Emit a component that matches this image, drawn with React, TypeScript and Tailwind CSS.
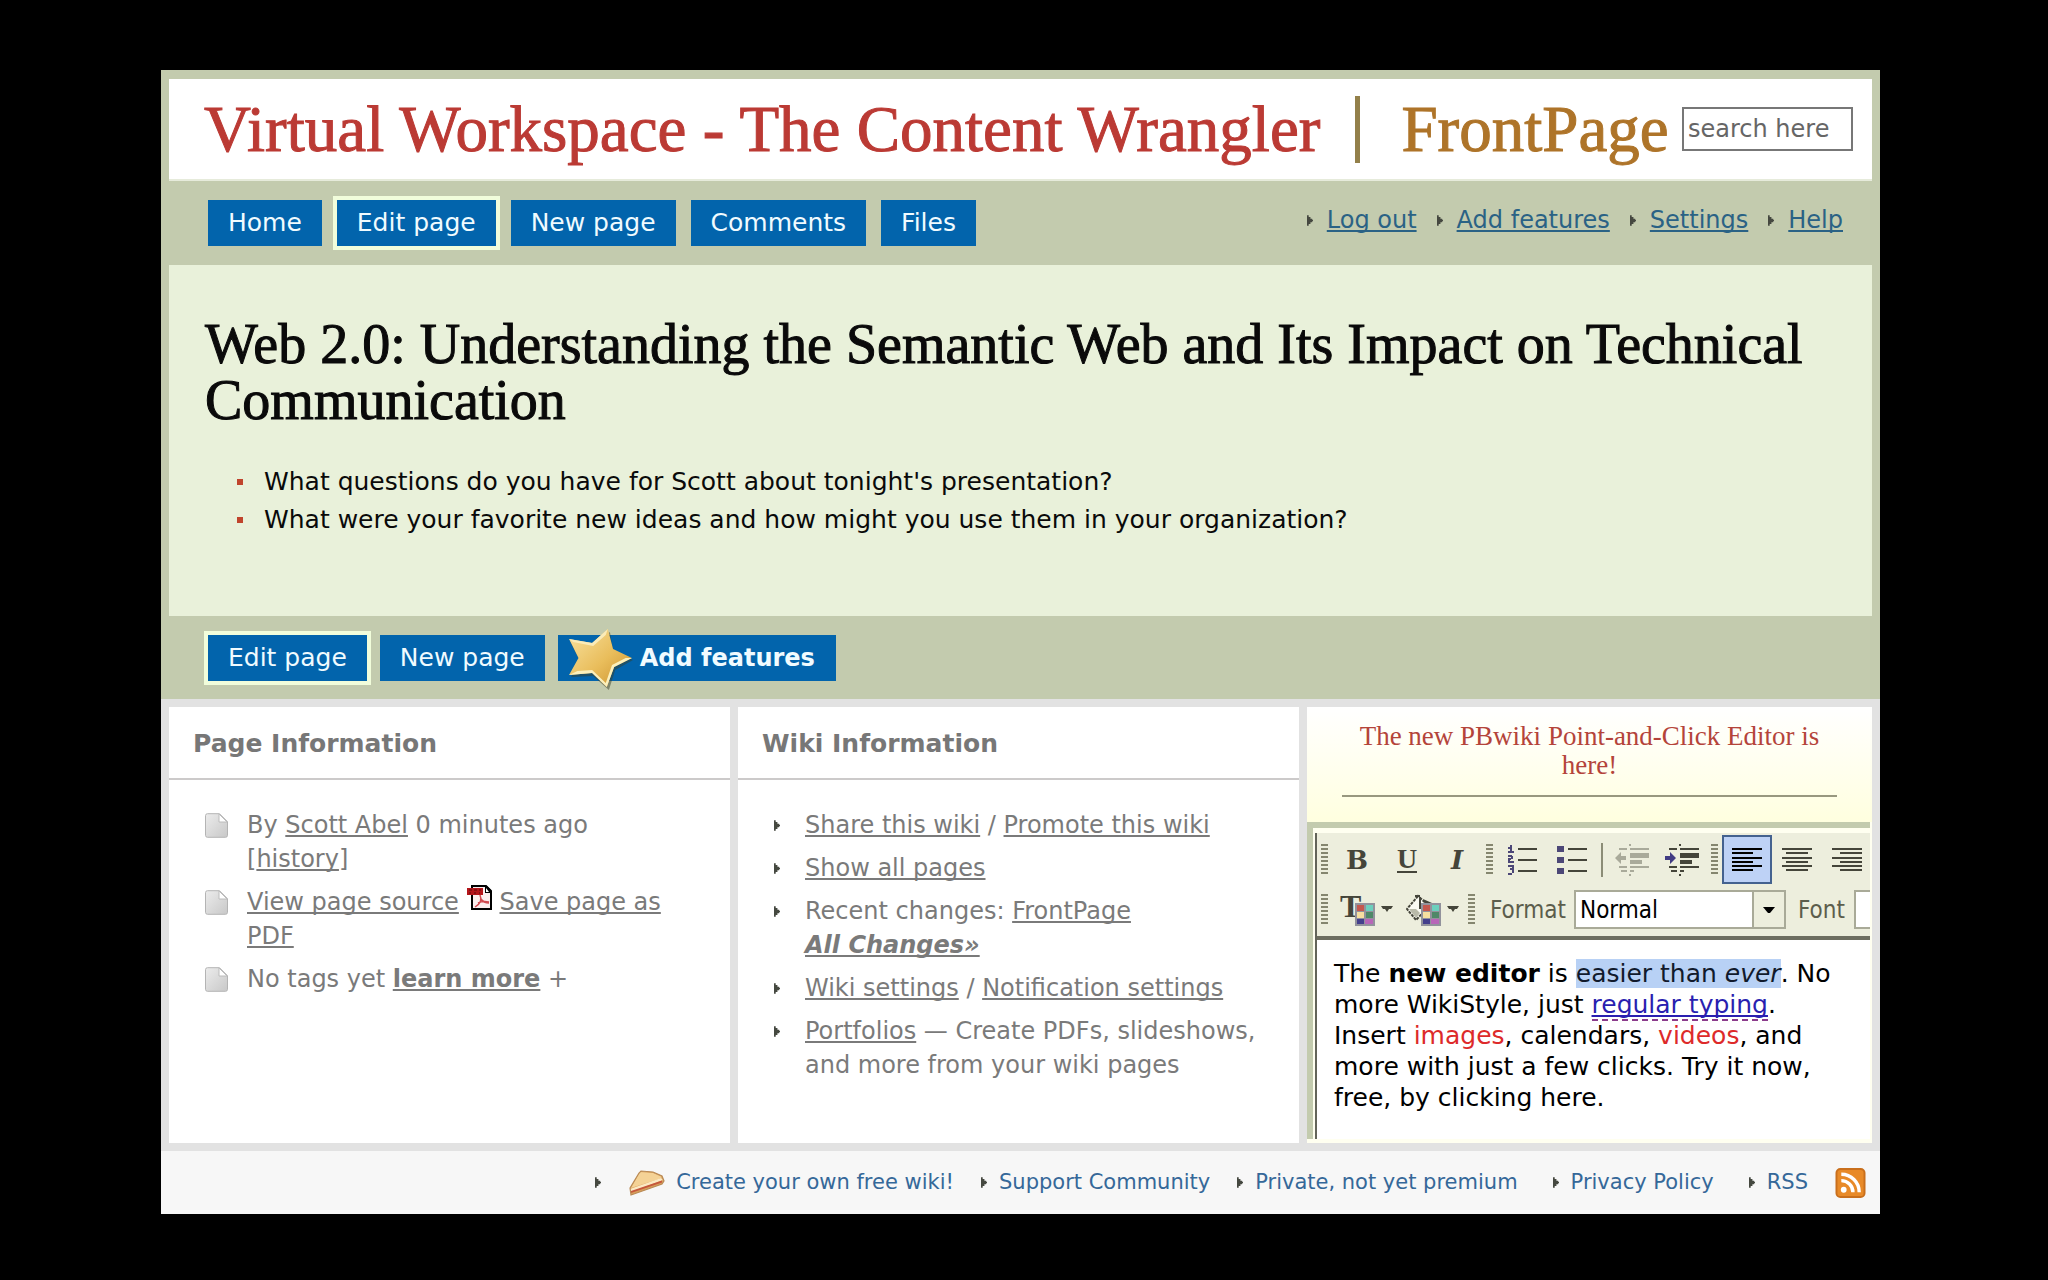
import type { ReactNode } from 'react'

const sans = "font-['Verdana','DejaVu_Sans',sans-serif]"
const narrow = "font-['Tahoma','DejaVu_Sans_Condensed','DejaVu_Sans',sans-serif]"
const serif = "font-['Georgia','Liberation_Serif',serif]"
const underlined = 'underline decoration-2 underline-offset-2 [text-decoration-skip-ink:none]'

function Arrow() {
  return (
    <svg viewBox="0 0 7 12" className="h-[11px] w-[6px] shrink-0 fill-[#454840]" aria-hidden="true">
      <path d="M0 0h2v2h2v2h2v1h1v2H6v1H4v2H2v2H0z" />
    </svg>
  )
}

function TabButton({ children, active = false }: { children: ReactNode; active?: boolean }) {
  return (
    <button
      type="button"
      className={`flex h-[46px] items-center bg-[#0264ac] px-5 text-[25px] text-[#f0fbff] ${
        active ? 'ring-4 ring-[#f1fddb]' : ''
      }`}
    >
      {children}
    </button>
  )
}

function TextLink({ children, className = '' }: { children: ReactNode; className?: string }) {
  return (
    <a href="#" className={`${underlined} ${className}`}>
      {children}
    </a>
  )
}

function StarIcon() {
  return (
    <svg viewBox="0 0 62 62" className="absolute -top-[6px] left-[10px] h-[62px] w-[65px]" preserveAspectRatio="none" aria-hidden="true">
      <defs>
        <linearGradient id="star" x1="0" y1="0" x2="1" y2="1">
          <stop offset="0" stopColor="#f8e2a0" />
          <stop offset="0.55" stopColor="#e9bd5b" />
          <stop offset="1" stopColor="#c98f2a" />
        </linearGradient>
      </defs>
      <path d="M40 3 43 22 62 31 45 41 39 61 24 47 3 48 11 31 2 13 24 16z" fill="#3a3d25" opacity="0.5" />
      <path d="M38 0 43 20 61 29 44 38 37 58 23 44 1 46 10 29 1 10 23 14z" fill="url(#star)" />
      <path d="M1 46 9 42 23 41 36 54 42 36 55 29 61 29 44 38 37 58 23 44z" fill="#fbf0bd" />
      <path d="M1 10 23 14 38 0 36 6 24 17 5 13z" fill="#faebb8" />
    </svg>
  )
}

function PageIcon() {
  return (
    <svg viewBox="0 0 23 25" className="h-[25px] w-[23px] shrink-0" aria-hidden="true">
      <defs>
        <linearGradient id="sheet" x1="0" y1="0" x2="1" y2="1">
          <stop offset="0" stopColor="#ececec" />
          <stop offset="1" stopColor="#c8c8c8" />
        </linearGradient>
      </defs>
      <path
        d="M2.500 .7h12l8 8v13.600a2 2 0 0 1-2 2h-18a2 2 0 0 1-2-2v-19.600a2 2 0 0 1 2-2z"
        fill="url(#sheet)"
        stroke="#b4b4b4"
      />
      <path d="M14 1v8h8z" fill="#fff" stroke="#bcbcbc" />
    </svg>
  )
}

function PdfIcon() {
  return (
    <svg viewBox="0 0 25 25" className="mr-2 inline-block h-[25px] w-[25px] align-[0px]" aria-hidden="true">
      <path d="M5 1h14l5 5v18H5z" fill="#fbeeee" stroke="#000" strokeWidth="2" />
      <path d="M18 1h2l4 4v3h-6z" fill="#000" />
      <path d="M19 3v4h3z" fill="#fff" />
      <path d="M0 3h16v7H0z" fill="#b5161b" />
      <path d="M2 5h3M7 5h3M12 5h2M2 8h2M7 8h2M12 8h1" stroke="#5d0a0c" strokeWidth="1" />
      <path d="M13 10c2 5 1 8-5 12M14 14c2 3 4 4 8 4M11 18c4-2 7-2 11-1" fill="none" stroke="#d04a50" strokeWidth="1.500" />
    </svg>
  )
}

function SandwichIcon() {
  return (
    <svg viewBox="0 0 36 26" className="h-[26px] w-9 shrink-0" aria-hidden="true">
      <path d="M1 18 10 3 12 1 24 2 33 6 35 11 33 14 2 25z" fill="#d9a05c" />
      <path d="M2 18 11 2 24 3 33 7 30 9z" fill="#f4d296" />
      <path d="M1 19 32 8 34 10 2 22z" fill="#fbe9c4" />
      <path d="M2 21 33 10.500 33 12.500 2 23z" fill="#c5573c" />
      <path d="M1 18 10 3 12 1 24 2 33 6 35 11 33 14 2 25z" fill="none" stroke="#b98a55" strokeWidth="1.200" />
    </svg>
  )
}

function RssIcon() {
  return (
    <svg viewBox="0 0 31 31" className="h-[30px] w-[31px] shrink-0" aria-hidden="true">
      <rect x="1" y="1" width="29" height="29" rx="4" fill="#e88a28" stroke="#c96f1c" strokeWidth="2" />
      <circle cx="8.500" cy="22.500" r="3" fill="#fff" />
      <path d="M6 13a12 12 0 0 1 12 12M6 6.500A18.500 18.500 0 0 1 24.500 25" fill="none" stroke="#fff" strokeWidth="3.500" />
    </svg>
  )
}

function Grip() {
  return (
    <svg viewBox="0 0 7 32" className="mx-1 h-8 w-[7px] shrink-0" aria-hidden="true">
      <path d="M0 1h7M0 5h7M0 9h7M0 13h7M0 17h7M0 21h7M0 25h7M0 29h7" stroke="#85866f" strokeWidth="2" />
    </svg>
  )
}

function ToolButton({ label, children, active = false }: { label: string; children: ReactNode; active?: boolean }) {
  return (
    <button
      type="button"
      aria-label={label}
      className={`flex h-[49px] w-[50px] shrink-0 items-center justify-center text-[#45453a] ${
        active ? 'border-2 border-[#44628f] bg-[#bed2f6] text-black' : ''
      }`}
    >
      {children}
    </button>
  )
}

function LinesIcon({ d }: { d: string }) {
  return (
    <svg viewBox="0 0 30 24" className="h-6 w-[30px]" stroke="currentColor" strokeWidth="2" aria-hidden="true">
      <path d={d} />
    </svg>
  )
}

function NumberedIcon() {
  return (
    <svg viewBox="0 0 30 30" className="h-[30px] w-[30px]" fill="none" strokeWidth="2" aria-hidden="true">
      <path d="M11 4h19M11 15h19M11 26h19" stroke="#45453a" />
      <path d="M1 3h2M4 0v6M1 7h6M1 11h4M5 11v3M4 14H2v3h5M1 21h5v3H3M6 24v4M1 29h4" stroke="#4c4777" />
    </svg>
  )
}

function BulletedIcon() {
  return (
    <svg viewBox="0 0 30 30" className="h-[30px] w-[30px]" aria-hidden="true">
      <path d="M11 4h19M11 15h19M11 26h19" stroke="#45453a" strokeWidth="2" />
      <path d="M0 1h7v6H0zM0 12h7v6H0zM0 23h7v6H0z" fill="#4c4777" />
    </svg>
  )
}

function IndentIcon({ outdent = false }: { outdent?: boolean }) {
  const ink = outdent ? '#a9aa9a' : '#45453a'
  return (
    <svg viewBox="0 0 34 32" className="h-8 w-[34px]" aria-hidden="true">
      <path d="M4 5h8M15 5h19M4 23h8M15 23h19M6 27h6M15 27h4M14 1h2M14 31h2" stroke={ink} strokeWidth="2" />
      <path d="M15 9h19v5H15zM15 16h12v4H15z" fill={ink} />
      {outdent ? (
        <path d="M0 14 6 8v4h5v4H6v4z" fill={ink} />
      ) : (
        <path d="M11 14 5 8v4H0v4h5v4z" fill="#413b83" />
      )}
    </svg>
  )
}

function Swatches() {
  return (
    <>
      <path d="M15 9h20v23H15z" fill="#92929c" />
      <path d="M17 11h7v6h-7z" fill="#c4574e" />
      <path d="M26 11h7v6h-7z" fill="#6cd0bd" />
      <path d="M17 18h7v6h-7z" fill="#f6dfa0" />
      <path d="M26 18h7v6h-7z" fill="#4f8868" />
      <path d="M17 25h7v5h-7z" fill="#443f8c" />
      <path d="M25 25h8v5h-8z" fill="#b866b8" />
      <path d="M41 12h12l-2 3h-2l-2 3-2-3h-2z" fill="#45453a" />
    </>
  )
}

function TextColorButton() {
  return (
    <button type="button" aria-label="Text color" className="relative h-[39px] w-[66px] shrink-0">
      <span className="absolute top-0 left-2 font-['Liberation_Serif',serif] text-[32px] leading-[32px] font-bold text-[#45453a]">
        T
      </span>
      <svg viewBox="0 0 53 32" className="absolute top-1 left-2 h-8 w-[53px]" aria-hidden="true">
        <Swatches />
      </svg>
    </button>
  )
}

function FillColorButton() {
  return (
    <button type="button" aria-label="Background color" className="relative h-[39px] w-[66px] shrink-0">
      <svg viewBox="0 0 53 32" className="absolute top-1 left-2 h-8 w-[53px]" aria-hidden="true">
        <path d="M12 2 1 15l9 11 13-14z" fill="#fbfbf3" stroke="#45453a" strokeWidth="2" strokeDasharray="3 1" />
        <path d="M3 15l7 9 4-5-4-4z" fill="#b9baa9" />
        <path d="M9 1h5v2H9zM13 3h2v12h-2zM17 5l9 4v4h-6z" fill="#45453a" />
        <Swatches />
      </svg>
    </button>
  )
}

function SectionTitle({ children }: { children: ReactNode }) {
  return (
    <h2 className="border-b-2 border-[#cccaca] pt-[19px] pb-4 pl-6 text-[25px] leading-9 font-bold text-[#777]">{children}</h2>
  )
}

function PageItem({ children }: { children: ReactNode }) {
  return (
    <li className="flex items-start gap-[19px]">
      <span className="flex h-[34px] items-center">
        <PageIcon />
      </span>
      <p>{children}</p>
    </li>
  )
}

function WikiItem({ children }: { children: ReactNode }) {
  return (
    <li className="flex items-start gap-[25px]">
      <span className="flex h-[34px] items-center">
        <Arrow />
      </span>
      <p>{children}</p>
    </li>
  )
}

function FooterLink({ children, spaced = false }: { children: ReactNode; spaced?: boolean }) {
  return (
    <li className={`flex items-center gap-3 ${spaced ? 'pl-2' : ''}`}>
      <Arrow />
      <a href="#" className="flex items-center gap-[11px]">
        {children}
      </a>
    </li>
  )
}

function EditorPromo() {
  return (
    <section className="flex flex-col bg-[#fffff0]">
      <div className="bg-linear-to-b from-white to-[#ffffdf] px-[35px] pt-[15px] pb-[25px]">
        <h2 className={`${serif} text-center text-[27px] leading-[29px] text-[#b4443a]`}>
          The new PBwiki Point-and-Click Editor is here!
        </h2>
        <hr className="mt-[15px] border-t-2 border-[#98987f]" />
      </div>
      <div className="mr-[2px] mb-1 flex-1 border-t-[6px] border-l-[6px] border-[#c3cbae] pt-[5px] pl-[2px]">
        <div className="h-full overflow-hidden border-l-2 border-[#63645a] bg-white">
          <div className="border-b-4 border-[#6d6e60] bg-[#edeedd] pt-[2px] pb-[7px]">
            <div className="flex items-center">
              <Grip />
              <ToolButton label="Bold">
                <span className="font-['DejaVu_Serif',serif] text-[26px] leading-none font-bold">B</span>
              </ToolButton>
              <ToolButton label="Underline">
                <span className="border-b-2 border-current font-['Liberation_Serif',serif] text-[28px] leading-[25px] font-bold">
                  U
                </span>
              </ToolButton>
              <ToolButton label="Italic">
                <span className="font-['DejaVu_Serif',serif] text-[26px] leading-none font-bold italic">I</span>
              </ToolButton>
              <Grip />
              <ToolButton label="Numbered list">
                <NumberedIcon />
              </ToolButton>
              <ToolButton label="Bulleted list">
                <BulletedIcon />
              </ToolButton>
              <span className="mx-1 h-[34px] w-[2px] shrink-0 bg-[#8c8d77]" />
              <ToolButton label="Outdent">
                <IndentIcon outdent />
              </ToolButton>
              <ToolButton label="Indent">
                <IndentIcon />
              </ToolButton>
              <Grip />
              <ToolButton label="Align left" active>
                <LinesIcon d="M0 1h30M0 5h21M0 10h30M0 14h21M0 18h30M0 22h21" />
              </ToolButton>
              <ToolButton label="Align center">
                <LinesIcon d="M0 1h30M4 5h22M0 10h30M4 14h22M0 18h30M4 22h22" />
              </ToolButton>
              <ToolButton label="Align right">
                <LinesIcon d="M0 1h30M8 5h22M0 10h30M8 14h22M0 18h30M8 22h22" />
              </ToolButton>
            </div>
            <div className={`${narrow} mt-[6px] flex items-center text-2xl text-[#5c5d4c]`}>
              <Grip />
              <TextColorButton />
              <FillColorButton />
              <Grip />
              <label htmlFor="format" className="ml-[11px] w-[84px] shrink-0">
                Format
              </label>
              <div className="relative shrink-0">
                <select
                  id="format"
                  className="block h-[39px] w-[212px] appearance-none border-2 border-[#a9aa98] bg-white pl-1 text-black"
                >
                  <option>Normal</option>
                </select>
                <span className="pointer-events-none absolute inset-y-[2px] right-[2px] flex w-8 items-center justify-center border-l-2 border-[#a9aa98] bg-[#edeedd]">
                  <svg viewBox="0 0 12 6" className="h-[6px] w-3" aria-hidden="true">
                    <path d="M0 0h12L7 6H5z" />
                  </svg>
                </span>
              </div>
              <label htmlFor="font" className="ml-3 w-14 shrink-0">
                Font
              </label>
              <select id="font" className="h-[39px] w-[212px] shrink-0 appearance-none border-2 border-[#a9aa98] bg-white" />
            </div>
          </div>
          <p className="px-[17px] pt-[18px] pb-[26px] text-[25px] leading-[31px] text-black">
            The <b>new editor</b> is{' '}
            <mark className="bg-[#b8d1f5] text-[#111a2c]">
              easier than <i>ever</i>
            </mark>
            . No more WikiStyle, just{' '}
            <a href="#" className={`${underlined} border-b-2 border-dashed border-[#8c3c8c] text-[#2a1fb0]`}>
              regular typing
            </a>
            . Insert <span className="text-[#dd2a2a]">images</span>, calendars,{' '}
            <span className="text-[#dd2a2a]">videos</span>, and more with just a few clicks. Try it now, free, by
            clicking here.
          </p>
        </div>
      </div>
    </section>
  )
}

export default function App() {
  return (
    <div className={`${sans} min-h-screen bg-black pt-[70px] pr-[168px] pb-[66px] pl-[161px]`}>
      <div className="bg-[#c3cbae] px-2 pt-[9px]">
        <header className="flex h-[102px] items-center border-b-2 border-[#e6ebdb] bg-white pr-[19px] pl-[35px]">
          <h1
            className={`${serif} flex flex-1 items-center text-[65px] leading-none whitespace-nowrap text-[#bb3a34] [-webkit-text-stroke:1px]`}
          >
            Virtual Workspace - The Content Wrangler
            <span className="mr-[41px] ml-[35px] h-[67px] w-[5px] bg-[#93804a]" />
            <span className="text-[#ae7429]">FrontPage</span>
          </h1>
          <input
            type="text"
            aria-label="Search"
            placeholder="search here"
            className="h-11 w-[171px] border-2 border-[#777] bg-white px-1 text-2xl placeholder:text-[#666]"
          />
        </header>

        <nav className="flex h-[84px] items-center justify-between pr-[29px] pl-[39px]">
          <div className="flex gap-[15px]">
            <TabButton>Home</TabButton>
            <TabButton active>Edit page</TabButton>
            <TabButton>New page</TabButton>
            <TabButton>Comments</TabButton>
            <TabButton>Files</TabButton>
          </div>
          <ul className="flex gap-5 pb-[6px] text-2xl text-[#2a6285]">
            {['Log out', 'Add features', 'Settings', 'Help'].map((item) => (
              <li key={item} className="flex items-center gap-[14px]">
                <Arrow />
                <TextLink>{item}</TextLink>
              </li>
            ))}
          </ul>
        </nav>

        <main className="bg-[#e9f1da] px-9 pt-[51px] pb-[77px] text-[#0a0a0a]">
          <h2 className={`${serif} text-[56px] leading-[56px] [-webkit-text-stroke:1px]`}>
            Web 2.0: Understanding the Semantic Web and Its Impact on Technical Communication
          </h2>
          <ul className="mt-[35px] pl-8 text-[25px] leading-[38px]">
            <li className="flex items-center gap-[21px]">
              <span className="size-[6px] bg-[#c0442c]" />
              What questions do you have for Scott about tonight's presentation?
            </li>
            <li className="flex items-center gap-[21px]">
              <span className="size-[6px] bg-[#c0442c]" />
              What were your favorite new ideas and how might you use them in your organization?
            </li>
          </ul>
        </main>

        <div className="flex h-[83px] items-center gap-[13px] pl-[39px]">
          <TabButton active>Edit page</TabButton>
          <TabButton>New page</TabButton>
          <button
            type="button"
            className="relative flex h-[46px] items-center bg-[#0264ac] pr-[21px] pl-[82px] text-2xl font-bold text-[#f0fbff]"
          >
            <StarIcon />
            Add features
          </button>
        </div>
      </div>

      <div className="grid grid-cols-[1fr_1fr_565px] gap-2 bg-[#e2e2e2] p-2 text-2xl leading-[34px] text-[#7a7a7a]">
        <section className="bg-white">
          <SectionTitle>Page Information</SectionTitle>
          <ul className="flex flex-col gap-[9px] px-9 pt-7">
            <PageItem>
              By <TextLink>Scott Abel</TextLink> 0 minutes ago
              <br />[<TextLink>history</TextLink>]
            </PageItem>
            <PageItem>
              <TextLink>View page source</TextLink> <PdfIcon />
              <TextLink>Save page as PDF</TextLink>
            </PageItem>
            <PageItem>
              No tags yet <TextLink className="font-bold">learn more</TextLink> +
            </PageItem>
          </ul>
        </section>

        <section className="bg-white">
          <SectionTitle>Wiki Information</SectionTitle>
          <ul className="flex flex-col gap-[9px] pt-7 pr-6 pl-9">
            <WikiItem>
              <TextLink>Share this wiki</TextLink> / <TextLink>Promote this wiki</TextLink>
            </WikiItem>
            <WikiItem>
              <TextLink>Show all pages</TextLink>
            </WikiItem>
            <WikiItem>
              Recent changes: <TextLink>FrontPage</TextLink>
              <br />
              <TextLink className="font-bold italic">All Changes»</TextLink>
            </WikiItem>
            <WikiItem>
              <TextLink>Wiki settings</TextLink> / <TextLink>Notification settings</TextLink>
            </WikiItem>
            <WikiItem>
              <TextLink>Portfolios</TextLink> — Create PDFs, slideshows, and more from your wiki pages
            </WikiItem>
          </ul>
        </section>

        <EditorPromo />
      </div>

      <footer className="bg-[#f7f7f7] pr-[14px]">
        <ul className="flex h-[63px] items-center justify-end gap-[27px] text-[21px] text-[#356899]">
          <FooterLink>
            <span className="pl-4">
              <SandwichIcon />
            </span>
            Create your own free wiki!
          </FooterLink>
          <FooterLink>Support Community</FooterLink>
          <FooterLink>Private, not yet premium</FooterLink>
          <FooterLink spaced>Privacy Policy</FooterLink>
          <FooterLink spaced>RSS</FooterLink>
          <li>
            <a href="#" aria-label="RSS feed">
              <RssIcon />
            </a>
          </li>
        </ul>
      </footer>
    </div>
  )
}
